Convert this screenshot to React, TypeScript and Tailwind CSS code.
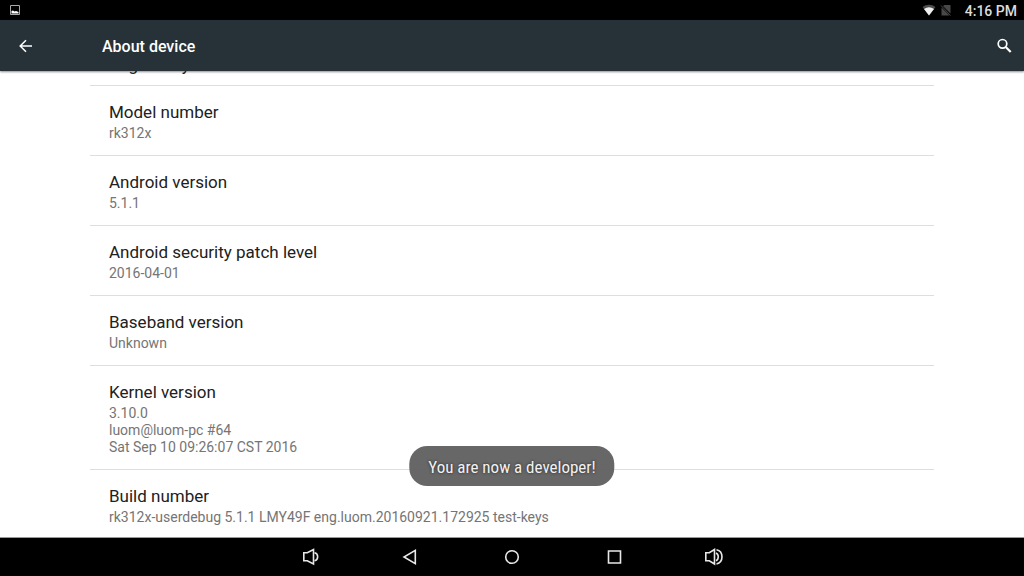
const deviceInfo = [
  { title: "Model number", lines: ["rk312x"] },
  { title: "Android version", lines: ["5.1.1"] },
  { title: "Android security patch level", lines: ["2016-04-01"] },
  { title: "Baseband version", lines: ["Unknown"] },
  { title: "Kernel version", lines: ["3.10.0", "luom@luom-pc #64", "Sat Sep 10 09:26:07 CST 2016"] },
  { title: "Build number", lines: ["rk312x-userdebug 5.1.1 LMY49F eng.luom.20160921.172925 test-keys"] },
];

const navButtons = [
  {
    label: "Volume down",
    icon: (
      <>
        <path d="M7.800 7.800h3.500l6.200-3.300v14.500l-6.200-3.300H7.800z" />
        <path d="M18.500 7.800c4.200 0.800 4.200 7.200 0 8" />
      </>
    ),
  },
  { label: "Back", icon: <path d="M17.300 5.300v13.400L6 12z" /> },
  { label: "Home", icon: <circle cx="12" cy="12" r="6.3" /> },
  { label: "Recent apps", icon: <path d="M6.500 6h12v12h-12z" /> },
  {
    label: "Volume up",
    icon: (
      <>
        <path d="M1.800 7.800h3.500l5.200-3.300v14.500l-5.200-3.300H1.800z" />
        <path d="M12 8c3 1.200 3 6.500 0 7.700" />
        <path d="M12.500 4.700c7.300 1.500 7.300 12.800 0 14.300" />
      </>
    ),
  },
];

function StatusBar() {
  return (
    <div className="flex h-5 shrink-0 items-center bg-black pl-[9px] pr-[7px] text-sm font-medium text-[#dcdcdc]">
      <svg className="h-3 w-3" viewBox="0 0 12 12">
        <path d="M1.500 1.500h9v9h-9z" fill="none" stroke="#a8a8a8" />
        <path d="M2.500 9.500V7l1.500-0.500 1.500 1 1.500-0.500 2.500 1v1.500z" fill="#ffffff" />
      </svg>
      <svg className="ml-auto h-3 w-[14px]" viewBox="0 0 14 12">
        <path d="M0.500 3a10.500 10.500 0 0 1 13 0L7 11.500z" fill="#4c4c4c" />
        <path d="M2 5a8.500 8.500 0 0 1 10 0L7 11.500z" fill="#f0f0f0" />
      </svg>
      <svg className="ml-1 h-3 w-3" viewBox="0 0 12 12">
        <path d="M4.500 1H10.500v8.500L3 2zM1.500 3.500 9.500 11.500H1.500z" fill="#484848" />
        <path d="M1 1.500 10.500 11.500" fill="none" stroke="#484848" />
      </svg>
      <time className="ml-[13px] pt-0.5">4:16 PM</time>
    </div>
  );
}

function AppBar() {
  return (
    <header className="relative z-10 flex h-[51px] shrink-0 items-center bg-[#263238] text-white shadow-[0_1px_2px_rgba(0,0,0,0.45)]">
      <button type="button" aria-label="Navigate up" className="ml-4 flex h-5 w-5 items-center justify-center">
        <svg className="h-5 w-5" viewBox="0 0 20 20" fill="none" stroke="currentColor" strokeWidth="1.500">
          <path d="M16 10H4.500M10 4.200 4.200 10l5.800 5.800" />
        </svg>
      </button>
      <h1 className="ml-[66px] pt-0.5 text-base font-medium">About device</h1>
      <button type="button" aria-label="Search" className="ml-auto mr-[10px] flex h-5 w-5 items-center justify-center">
        <svg className="h-5 w-5" viewBox="0 0 20 20" fill="none" stroke="currentColor">
          <circle cx="8.500" cy="7.800" r="4.300" strokeWidth="1.700" />
          <path d="M11.700 11 16.700 16" strokeWidth="2.200" />
        </svg>
      </button>
    </header>
  );
}

export default function App() {
  return (
    <div className="relative flex h-screen flex-col bg-white font-['Roboto',sans-serif]">
      <StatusBar />
      <AppBar />

      <main className="flex min-h-0 flex-1 flex-col justify-end overflow-hidden px-[90px]">
        <ul className="-mb-px divide-y divide-[#dedede]">
          {/* single-line entry, scrolled almost entirely under the app bar */}
          <li className="px-[19px] pt-4 pb-2">
            <h2 className="text-[17px] leading-6 text-[#212121]">Regulatory information</h2>
          </li>
          {deviceInfo.map((item) => (
            <li key={item.title} className="px-[19px] pt-[14px] pb-[13px]">
              <h2 className="mb-px text-[17px] leading-6 text-[#212121]">{item.title}</h2>
              {item.lines.map((line) => (
                <p key={line} className="text-sm leading-[17px] text-[#757575]">{line}</p>
              ))}
            </li>
          ))}
        </ul>
      </main>

      <nav className="relative flex h-[38px] shrink-0 justify-center bg-black text-[#e8e8e8] shadow-[0_-1px_0_#999999]">
        {navButtons.map((button) => (
          <button key={button.label} type="button" aria-label={button.label} className="flex w-[102px] items-center justify-center">
            <svg className="h-6 w-6" viewBox="0 0 24 24" fill="none" stroke="currentColor" strokeWidth="1.600">
              {button.icon}
            </svg>
          </button>
        ))}
      </nav>

      <div
        role="status"
        className="absolute bottom-[90px] left-1/2 -translate-x-1/2 rounded-[18px] bg-[#5f5f5f]/95 px-[19px] pt-[9px] pb-[7px] font-['Roboto_Condensed','Roboto',sans-serif] text-[17px] leading-6 whitespace-nowrap text-[#f2f2f2] [text-shadow:0_0_3px_rgba(0,0,0,0.7)]"
      >
        You are now a developer!
      </div>
    </div>
  );
}
